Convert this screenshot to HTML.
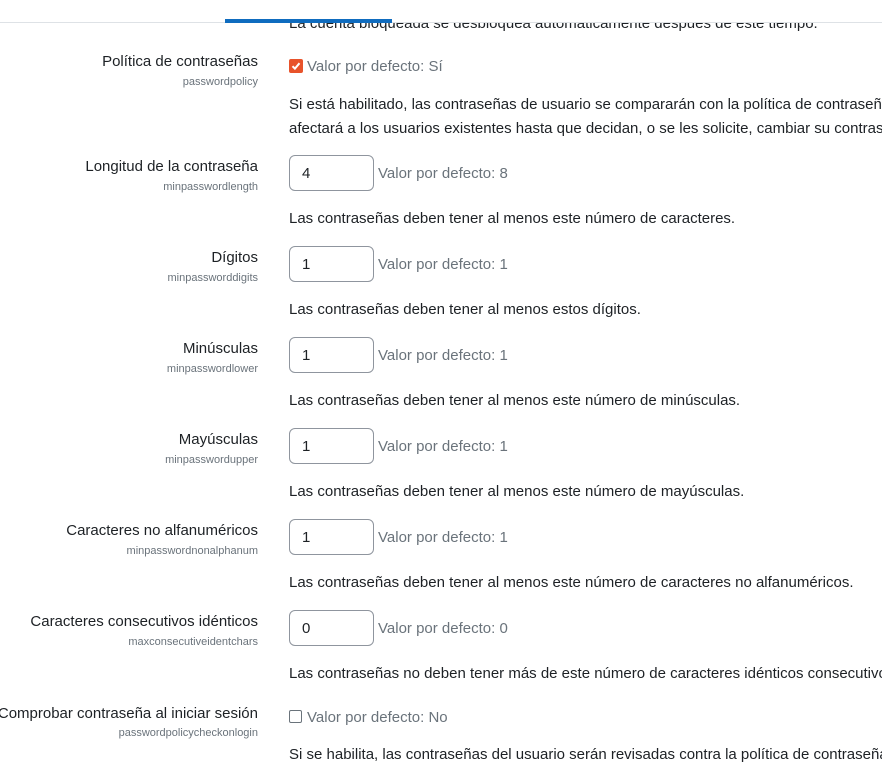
<!DOCTYPE html>
<html><head><meta charset="utf-8"><style>
body{margin:0;width:882px;height:754px;overflow:hidden;background:#fff;font-family:"Liberation Sans",sans-serif;color:#1d2125;position:relative}
.a{position:absolute;white-space:nowrap}
.lbl{right:624px;font-size:15px;text-align:right}
.cd{right:624px;font-size:11px;color:#6a737b;text-align:right}
.t{left:289px;font-size:15px}
.def{font-size:15px;color:#6a737b}
.inp{position:absolute;left:289px;width:83px;height:34px;border:1px solid #8f959e;border-radius:6px;font-size:15px;line-height:35px;box-sizing:content-box;text-indent:12px;color:#1d2125}
.hdr{position:absolute;left:0;top:0;width:882px;height:22px;background:#fff;border-bottom:1px solid #dee2e6}
</style></head><body>
<div class="a t" style="top:15px">La cuenta bloqueada se desbloquea automáticamente después de este tiempo.</div>
<div class="hdr"></div>
<div class="a" style="left:0;top:-8px;width:3px;height:8px;background:#555"></div>
<div class="a" style="left:44px;top:-4px;width:1px;height:4px;background:#555"></div>
<div class="a" style="left:225px;top:19px;width:167px;height:4px;background:#0f6cbf"></div>

<div class="a lbl" style="top:53px">Política de contraseñas</div>
<div class="a cd" style="top:76px">passwordpolicy</div>
<div class="a" style="left:289px;top:59px;width:14px;height:14px;background:#e8532b;border-radius:2px"></div>
<svg class="a" style="left:290px;top:60px" width="12" height="12" viewBox="0 0 12 12"><path d="M2.5 6.2l2.4 2.4 4.6-5.4" stroke="#fff" stroke-width="2" fill="none"/></svg>
<div class="a def" style="left:307px;top:58px">Valor por defecto: Sí</div>
<div class="a t" style="top:96px">Si está habilitado, las contraseñas de usuario se compararán con la política de contraseñas</div>
<div class="a t" style="top:120px">afectará a los usuarios existentes hasta que decidan, o se les solicite, cambiar su contraseña</div>

<div class="a lbl" style="top:158px">Longitud de la contraseña</div>
<div class="a cd" style="top:181px">minpasswordlength</div>
<div class="inp" style="top:155px">4</div>
<div class="a def" style="left:378px;top:165px">Valor por defecto: 8</div>
<div class="a t" style="top:210px">Las contraseñas deben tener al menos este número de caracteres.</div>

<div class="a lbl" style="top:249px">Dígitos</div>
<div class="a cd" style="top:272px">minpassworddigits</div>
<div class="inp" style="top:246px">1</div>
<div class="a def" style="left:378px;top:256px">Valor por defecto: 1</div>
<div class="a t" style="top:301px">Las contraseñas deben tener al menos estos dígitos.</div>

<div class="a lbl" style="top:340px">Minúsculas</div>
<div class="a cd" style="top:363px">minpasswordlower</div>
<div class="inp" style="top:337px">1</div>
<div class="a def" style="left:378px;top:347px">Valor por defecto: 1</div>
<div class="a t" style="top:392px">Las contraseñas deben tener al menos este número de minúsculas.</div>

<div class="a lbl" style="top:431px">Mayúsculas</div>
<div class="a cd" style="top:454px">minpasswordupper</div>
<div class="inp" style="top:428px">1</div>
<div class="a def" style="left:378px;top:438px">Valor por defecto: 1</div>
<div class="a t" style="top:483px">Las contraseñas deben tener al menos este número de mayúsculas.</div>

<div class="a lbl" style="top:522px">Caracteres no alfanuméricos</div>
<div class="a cd" style="top:545px">minpasswordnonalphanum</div>
<div class="inp" style="top:519px">1</div>
<div class="a def" style="left:378px;top:529px">Valor por defecto: 1</div>
<div class="a t" style="top:574px">Las contraseñas deben tener al menos este número de caracteres no alfanuméricos.</div>

<div class="a lbl" style="top:613px">Caracteres consecutivos idénticos</div>
<div class="a cd" style="top:636px">maxconsecutiveidentchars</div>
<div class="inp" style="top:610px">0</div>
<div class="a def" style="left:378px;top:620px">Valor por defecto: 0</div>
<div class="a t" style="top:665px">Las contraseñas no deben tener más de este número de caracteres idénticos consecutivos.</div>

<div class="a lbl" style="top:705px">Comprobar contraseña al iniciar sesión</div>
<div class="a cd" style="top:727px">passwordpolicycheckonlogin</div>
<div class="a" style="left:289px;top:710px;width:11px;height:11px;border:1px solid #6a737b;border-radius:2px"></div>
<div class="a def" style="left:307px;top:709px">Valor por defecto: No</div>
<div class="a t" style="top:746px">Si se habilita, las contraseñas del usuario serán revisadas contra la política de contraseñas</div>
</body></html>
